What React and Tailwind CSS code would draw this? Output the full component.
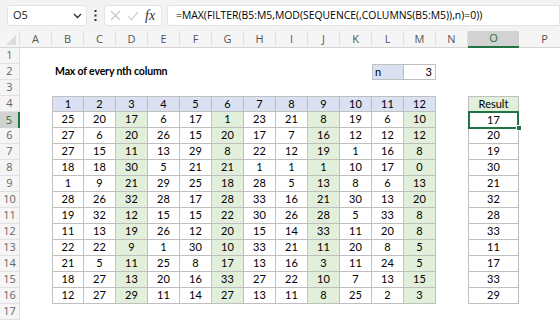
import React from "react";

const COLS = [
  { k: "A", w: "w-[32px]" },
  { k: "B", w: "w-[32px]" },
  { k: "C", w: "w-[32px]" },
  { k: "D", w: "w-[32px]" },
  { k: "E", w: "w-[32px]" },
  { k: "F", w: "w-[32px]" },
  { k: "G", w: "w-[32px]" },
  { k: "H", w: "w-[32px]" },
  { k: "I", w: "w-[32px]" },
  { k: "J", w: "w-[32px]" },
  { k: "K", w: "w-[32px]" },
  { k: "L", w: "w-[32px]" },
  { k: "M", w: "w-[32px]" },
  { k: "N", w: "w-[32px]" },
  { k: "O", w: "w-[51px]" },
  { k: "P", w: "w-[52px]" },
];

const DATA = [
  [25, 20, 17, 6, 17, 1, 23, 21, 8, 19, 6, 10],
  [27, 6, 20, 26, 15, 20, 17, 7, 16, 12, 12, 12],
  [27, 15, 11, 13, 29, 8, 22, 12, 19, 1, 16, 8],
  [18, 18, 30, 5, 21, 21, 1, 1, 1, 10, 17, 0],
  [1, 9, 21, 29, 25, 18, 28, 5, 13, 8, 6, 13],
  [28, 26, 32, 28, 17, 28, 33, 16, 21, 30, 13, 20],
  [19, 32, 12, 15, 15, 22, 30, 26, 28, 5, 33, 8],
  [11, 13, 19, 26, 12, 20, 15, 14, 33, 11, 20, 8],
  [22, 22, 9, 1, 30, 10, 33, 21, 11, 20, 8, 5],
  [21, 5, 11, 25, 8, 17, 13, 16, 3, 11, 24, 5],
  [18, 27, 13, 20, 16, 33, 27, 22, 10, 7, 13, 15],
  [12, 27, 29, 11, 14, 27, 13, 11, 8, 25, 2, 3],
];
const RESULTS = [17, 20, 19, 30, 21, 32, 28, 33, 11, 17, 33, 29];

function Cell({ w, className = "", children }) {
  return (
    <div className={`${w} h-[16px] shrink-0 flex items-center ${className}`}>
      {children}
    </div>
  );
}

function Row({ n, children, selected }) {
  return (
    <div className="flex h-[16px]">
      <div
        className={
          selected
            ? "w-[20px] h-[16px] shrink-0 flex items-center justify-center bg-[#d2d2d2] border-r-2 border-[#217346] text-[#217346] text-[11px] font-['Open_Sans',sans-serif]"
            : "w-[20px] h-[16px] shrink-0 flex items-center justify-center bg-[#f5f5f5] border-r border-b border-[#e1e1e1] text-[#666666] text-[11px] font-['Open_Sans',sans-serif]"
        }
      >
        {n}
      </div>
      {children}
    </div>
  );
}

function EmptyCells({ from, to }) {
  return COLS.slice(from, to).map((c) => <Cell key={c.k} w={c.w} />);
}

export default function App() {
  const cellFont = "font-['Lato','Liberation_Sans',sans-serif] text-[11px] text-black";
  return (
    <div className="w-[560px] h-[320px] overflow-hidden bg-white font-['Open_Sans','Liberation_Sans',sans-serif]">
      {/* formula bar */}
      <div className="h-[31px] bg-[#f3f3f3] flex items-start pt-[5px] pl-[7px]">
        <div className="w-[80px] h-[21px] bg-white rounded-[3px] border border-[#e3e3e3] flex items-center justify-between pl-[5px] pr-[4px]">
          <span className="text-[11px] text-[#222]">O5</span>
          <svg width="9" height="6" viewBox="0 0 9 6">
            <path d="M1 1 L4.5 4.5 L8 1" fill="none" stroke="#333" strokeWidth="1.4" />
          </svg>
        </div>
        <div className="w-[17px] h-[21px] flex items-center justify-center">
          <svg width="3" height="11" viewBox="0 0 3 11">
            <rect x="0.5" y="0" width="2" height="2" fill="#333" />
            <rect x="0.5" y="4.5" width="2" height="2" fill="#333" />
            <rect x="0.5" y="9" width="2" height="2" fill="#333" />
          </svg>
        </div>
        <div className="w-[58px] h-[21px] bg-white rounded-[3px] border border-[#e3e3e3] flex items-center pl-[5px] gap-[6px]">
          <svg width="11" height="11" viewBox="0 0 11 11">
            <path d="M1 1 L10 10 M10 1 L1 10" stroke="#c6c6c6" strokeWidth="1.1" />
          </svg>
          <svg width="12" height="10" viewBox="0 0 12 10">
            <path d="M1 5 L4.5 9 L11 1" fill="none" stroke="#c6c6c6" strokeWidth="1.1" />
          </svg>
          <span className="font-['Liberation_Serif',serif] italic text-[14px] text-[#333] leading-none">fx</span>
        </div>
        <div className="ml-[5px] flex-1 h-[21px] bg-white rounded-l-[3px] border border-[#e3e3e3] flex items-center pl-[8px]">
          <span className="text-[10.4px] text-black whitespace-nowrap">
            =MAX(FILTER(B5:M5,MOD(SEQUENCE(,COLUMNS(B5:M5)),n)=0))
          </span>
        </div>
      </div>

      {/* column headers */}
      <div className="flex h-[17px] bg-[#f5f5f5] border-b border-[#d4d4d4]">
        <div className="w-[20px] h-[17px] shrink-0 flex items-end justify-end pr-[3px] pb-[3px] border-r border-[#e1e1e1]">
          <svg width="10" height="10" viewBox="0 0 10 10">
            <path d="M10 0 L10 10 L0 10 Z" fill="#dcdcdc" />
          </svg>
        </div>
        {COLS.map((c) => (
          <div
            key={c.k}
            className={
              c.k === "O"
                ? `${c.w} h-[17px] shrink-0 flex items-center justify-center bg-[#d2d2d2] border-b-2 border-[#217346] text-[#217346] text-[11px]`
                : `${c.w} h-[17px] shrink-0 flex items-center justify-center border-r border-[#e1e1e1] text-[#555] text-[11px]`
            }
          >
            {c.k}
          </div>
        ))}
      </div>

      <div className={cellFont}>
        <Row n={1}>
          <EmptyCells from={0} to={16} />
        </Row>
        <Row n={2}>
          <Cell w="w-[32px]" />
          <div className="w-[320px] h-[16px] shrink-0 flex items-center pl-[3px] font-bold text-[10.5px] tracking-[-0.15px]">
            Max of every nth column
          </div>
          <Cell w="w-[32px]" className="bg-[#d9e1f2] border border-[#bfbfbf] pl-[2px]">n</Cell>
          <Cell w="w-[32px]" className="border-y border-r border-[#bfbfbf] justify-end pr-[3px]">3</Cell>
          <EmptyCells from={13} to={16} />
        </Row>
        <Row n={3}>
          <EmptyCells from={0} to={16} />
        </Row>
        <Row n={4}>
          <Cell w="w-[32px]" />
          {Array.from({ length: 12 }, (_, i) => (
            <Cell
              key={i}
              w="w-[32px]"
              className={
                i === 0
                  ? "justify-center bg-[#d9e1f2] border border-[#bfbfbf]"
                  : "justify-center bg-[#d9e1f2] border-t border-r border-b border-[#bfbfbf]"
              }
            >
              {i + 1}
            </Cell>
          ))}
          <Cell w="w-[32px]" />
          <Cell w="w-[51px]" className="justify-center bg-[#e2efda] border border-[#bfbfbf]">
            Result
          </Cell>
          <Cell w="w-[52px]" />
        </Row>
        {DATA.map((row, r) => (
          <Row key={r} n={r + 5} selected={r === 0}>
            <Cell w="w-[32px]" />
            {row.map((v, i) => {
              const green = (i + 1) % 3 === 0;
              const cls = green
                ? "justify-center bg-[#e2efda] border-r border-b border-[#bfbfbf]"
                : i === 0
                ? "justify-center border-l border-r border-b border-[#bfbfbf]"
                : "justify-center border-r border-b border-[#bfbfbf]";
              return (
                <Cell key={i} w="w-[32px]" className={cls}>
                  {v}
                </Cell>
              );
            })}
            <Cell w="w-[32px]" />
            {r === 0 ? (
              <div className="relative w-[51px] h-[16px] shrink-0">
                <div className="absolute left-0 top-[-1px] w-[51px] h-[18px] border-2 border-[#217346] flex items-center justify-center bg-white">
                  {RESULTS[r]}
                </div>
                <div className="absolute right-[-3px] bottom-[-3px] w-[6px] h-[6px] bg-[#217346] border border-white" />
              </div>
            ) : (
              <Cell w="w-[51px]" className="justify-center border-l border-r border-b border-[#bfbfbf]">
                {RESULTS[r]}
              </Cell>
            )}
            <Cell w="w-[52px]" />
          </Row>
        ))}
        <Row n={17}>
          <EmptyCells from={0} to={16} />
        </Row>
      </div>
    </div>
  );
}
